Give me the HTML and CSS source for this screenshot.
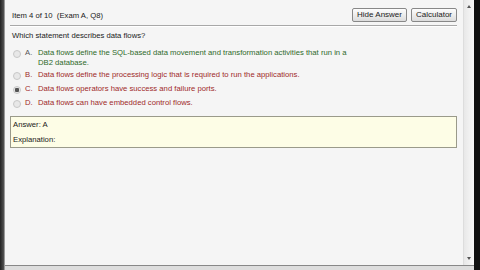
FILE: index.html
```html
<!DOCTYPE html>
<html>
<head>
<meta charset="utf-8">
<link rel="stylesheet" href="styles.css">
</head>
<body>
<div class="frame">
  <div class="edge-left"></div>
  <div class="window">
    <div class="viewport">
      <div class="content">
        <div class="header">
          <div class="item">Item 4 of 10&nbsp; (Exam A, Q8)</div>
          <div class="buttons">
            <button class="btn">Hide Answer</button>
            <button class="btn">Calculator</button>
          </div>
        </div>
        <div class="rule"></div>
        <div class="question">Which statement describes data flows?</div>
        <div class="options">
          <div class="opt correct">
            <span class="radio"></span><span class="letter">A.</span>
            <span class="text">Data flows define the SQL-based data movement and transformation activities that run in a DB2 database.</span>
          </div>
          <div class="opt wrong">
            <span class="radio"></span><span class="letter">B.</span>
            <span class="text">Data flows define the processing logic that is required to run the applications.</span>
          </div>
          <div class="opt wrong">
            <span class="radio checked"></span><span class="letter">C.</span>
            <span class="text">Data flows operators have success and failure ports.</span>
          </div>
          <div class="opt wrong">
            <span class="radio"></span><span class="letter">D.</span>
            <span class="text">Data flows can have embedded control flows.</span>
          </div>
        </div>
        <div class="answer">
          <div class="ans-line">Answer: A</div>
          <div class="ans-line">Explanation:</div>
        </div>
      </div>
      <div class="scrollbar">
        <span class="arrow up"></span>
        <span class="arrow down"></span>
      </div>
    </div>
    <div class="status"></div>
  </div>
  <div class="edge-right"></div>
</div>
</body>
</html>
```
FILE: styles.css
```css
html, body {
  margin: 0;
  padding: 0;
  width: 480px;
  height: 270px;
  overflow: hidden;
  background: #111;
  font-family: "Liberation Sans", Arial, sans-serif;
}
.frame {
  display: flex;
  width: 480px;
  height: 270px;
}
.edge-left {
  width: 4px;
  background: linear-gradient(90deg, #222, #555);
}
.edge-right {
  width: 6px;
  background: #111;
}
.window {
  flex: 1;
  display: flex;
  flex-direction: column;
  background: #f5f5f5;
  border-left: 1px solid #999;
}
.viewport {
  flex: 1;
  display: flex;
  min-height: 0;
}
.content {
  flex: 1;
  padding: 6px 6px 0 5px;
  font-size: 7.7px;
  color: #1a1a1a;
}
.header {
  display: flex;
  justify-content: space-between;
  align-items: center;
  height: 16px;
}
.item {
  padding-left: 2px;
  padding-top: 2px;
}
.buttons {
  display: flex;
  gap: 4px;
  padding-top: 1px;
}
.btn {
  font-family: "Liberation Sans", Arial, sans-serif;
  font-size: 8px;
  height: 14px;
  padding: 0 4px;
  border: 1px solid #888;
  border-radius: 2px;
  background: linear-gradient(#fdfdfd, #dcdcdc);
  color: #222;
}
.rule {
  height: 0;
  border-top: 1px solid #a8a8a8;
  border-bottom: 1px solid #fff;
  margin: 3px 0 4px 0;
}
.question {
  padding-left: 2px;
  margin-bottom: 8px;
}
.options {
  display: flex;
  flex-direction: column;
  gap: 2px;
  padding-left: 3px;
}
.opt {
  display: flex;
  align-items: flex-start;
  line-height: 10px;
  min-height: 12px;
}
.radio {
  flex: none;
  width: 6px;
  height: 6px;
  border-radius: 50%;
  border: 1px solid #c8c8c8;
  background: #e8e8e8;
  margin-top: 2px;
  margin-right: 4px;
  box-sizing: content-box;
}
.radio.checked {
  background: radial-gradient(circle, #555 0 2px, #e8e8e8 2.5px);
}
.letter {
  flex: none;
  width: 13px;
}
.text {
  width: 320px;
}
.correct { color: #2f6a2a; }
.correct .letter { color: #555; }
.wrong { color: #a02a2a; }
.answer {
  margin: 6px 0 0 0;
  background: #fdfde6;
  border: 1px solid #9a9a8a;
  padding: 0 2px;
}
.ans-line {
  line-height: 15px;
}
.scrollbar {
  width: 10px;
  position: relative;
  background: linear-gradient(90deg, #e8e8e8, #f8f8f8);
  border-left: 1px solid #ddd;
}
.arrow {
  position: absolute;
  left: 3px;
  width: 0;
  height: 0;
  border-left: 2px solid transparent;
  border-right: 2px solid transparent;
}
.arrow.up { top: 5px; border-bottom: 3px solid #555; }
.arrow.down { bottom: 5px; border-top: 3px solid #555; }
.status {
  height: 4px;
  border-top: 1px solid #888;
  background: #ddd;
}
```
